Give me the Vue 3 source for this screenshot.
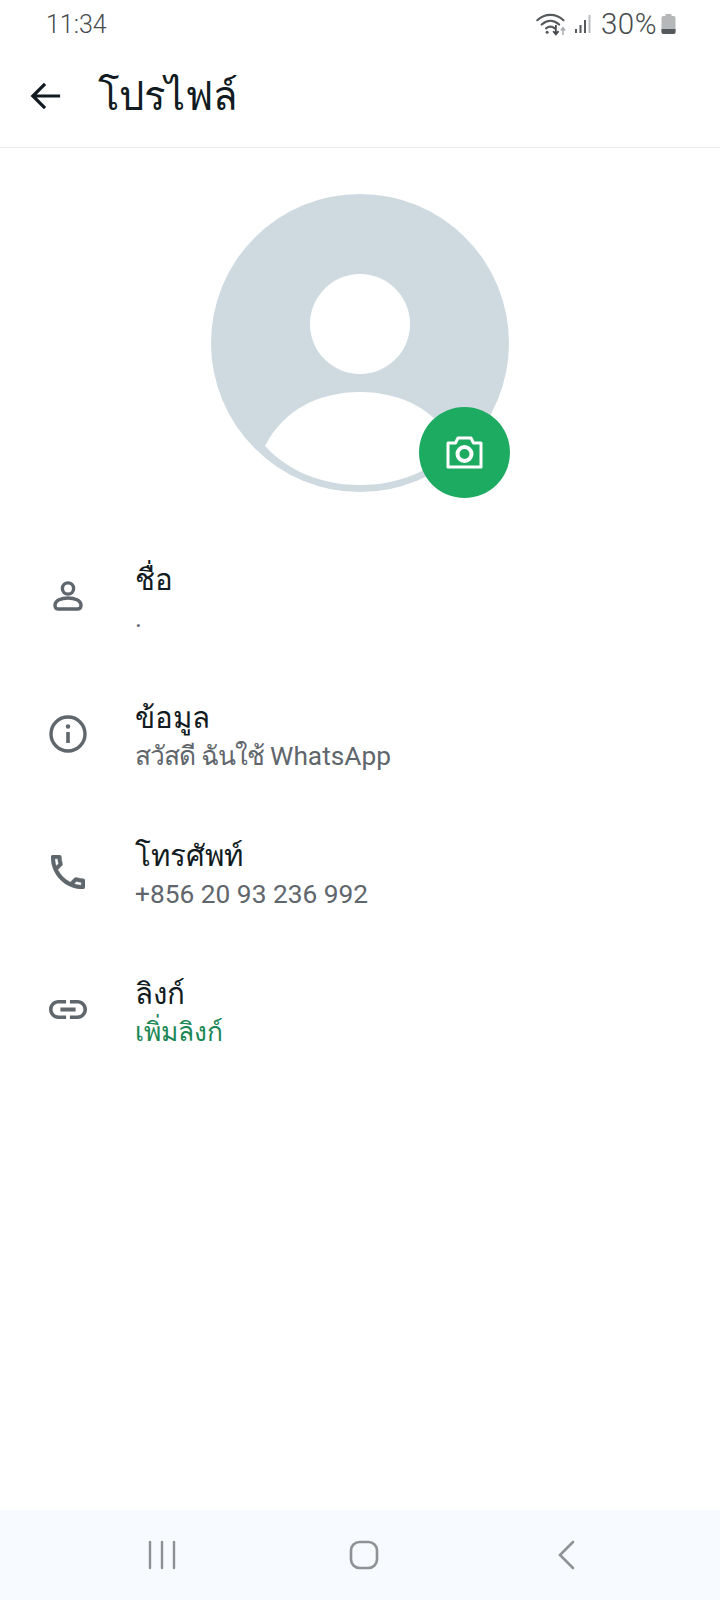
<script setup>
const rows = [
  { id: "name", title: "ชื่อ", sub: "." },
  { id: "about", title: "ข้อมูล", lead: "สวัสดี ฉันใช้", sub: " WhatsApp" },
  { id: "phone", title: "โทรศัพท์", sub: "+856 20 93 236 992" },
  { id: "link", title: "ลิงก์", sub: "เพิ่มลิงก์", green: true },
];
</script>

<template>
  <div class="screen">
    <div class="status-bar">
      <span class="time">11:34</span>
      <div class="status-right">
        <svg class="wifi" width="33" height="24" viewBox="0 0 30 22" fill="none">
          <path d="M2 7.500C9 1 19 1 26 7.500" stroke="#55595c" stroke-width="2" stroke-linecap="round" />
          <path d="M6 11.500C11 7 17 7 22 11.500" stroke="#55595c" stroke-width="2" stroke-linecap="round" />
          <path d="M10 15C12.500 13 15.500 13 18 15" stroke="#55595c" stroke-width="2" stroke-linecap="round" />
          <circle cx="11" cy="18.500" r="1.400" fill="#55595c" />
          <path d="M19 12V20M16.500 17.500L19 20.500L21.500 17.500" stroke="#44484b" stroke-width="1.600" />
          <path d="M25.500 21V15M23.500 17L25.500 14.500L27.500 17" stroke="#a9acae" stroke-width="1.400" />
        </svg>
        <svg class="signal" width="18" height="20" viewBox="0 0 17 20">
          <rect x="0.500" y="15" width="2" height="4" fill="#55595c" />
          <rect x="5" y="11" width="2" height="8" fill="#55595c" />
          <rect x="9.500" y="6" width="2" height="13" fill="#55595c" />
          <rect x="14" y="1" width="2" height="18" fill="#b9bbbd" />
        </svg>
        <span class="percent">30%</span>
        <svg class="battery" width="15" height="20" viewBox="0 0 15 20">
          <rect x="4.500" y="0" width="6" height="3" fill="#b5b7b8" />
          <rect x="0.500" y="2" width="14" height="18" rx="2" fill="#b5b7b8" />
          <path d="M0.500 15H14.500V18A2 2 0 0 1 12.500 20H2.500A2 2 0 0 1 0.500 18Z" fill="#55595c" />
        </svg>
      </div>
    </div>

    <header class="app-bar">
      <svg class="back" width="32" height="30" viewBox="0 0 34 30" fill="none">
        <path d="M32 15H3M16 2L3 15L16 28" stroke="#111b21" stroke-width="3.400" />
      </svg>
      <h1 class="page-title">โปรไฟล์</h1>
    </header>

    <div class="avatar-wrap">
      <div class="avatar">
        <svg width="298" height="298" viewBox="0 0 298 298">
          <circle cx="149" cy="149" r="149" fill="#cfdae0" />
          <circle cx="149" cy="130" r="50" fill="#fff" />
          <path d="M54 252C72 216 108 198 149 198C190 198 226 216 244 252C220 278 186 291 149 291C112 291 78 278 54 252Z" fill="#fff" />
        </svg>
        <button class="camera">
          <svg width="37" height="33" viewBox="0 0 37 33" fill="none">
            <path d="M2 7H9.500L12 2H25L27.500 7H35V31H2Z" stroke="#fff" stroke-width="3" stroke-linejoin="round" />
            <circle cx="18.500" cy="18" r="7" stroke="#fff" stroke-width="4" />
          </svg>
        </button>
      </div>
    </div>

    <ul class="info-list">
      <li v-for="row in rows" :key="row.id" class="info-row">
        <div class="icon-cell">
          <svg v-if="row.id === 'name'" width="30" height="30" viewBox="0 0 30 30" fill="none">
            <circle cx="15" cy="7.500" r="5.600" stroke="#5f666c" stroke-width="3.400" />
            <path d="M2 24C2 19.500 8.500 17 15 17C21.500 17 28 19.500 28 24C28 26.500 27 28 25 28H5C3 28 2 26.500 2 24Z" stroke="#5f666c" stroke-width="3.400" />
          </svg>
          <svg v-else-if="row.id === 'about'" width="38" height="38" viewBox="0 0 38 38" fill="none">
            <circle cx="19" cy="19" r="17" stroke="#5f666c" stroke-width="3.400" />
            <path d="M19 17V28" stroke="#5f666c" stroke-width="3.600" />
            <circle cx="19" cy="11.500" r="2.200" fill="#5f666c" />
          </svg>
          <svg v-else-if="row.id === 'phone'" width="34" height="34" viewBox="3 3 18 18">
            <path d="M6.540 5c.06.89.21 1.760.45 2.590l-1.200 1.200c-.41-1.200-.67-2.470-.76-3.790h1.510m9.860 12.020c.85.24 1.720.39 2.600.45v1.490c-1.320-.09-2.590-.35-3.800-.75l1.200-1.190M7.500 3H4c-.55 0-1 .45-1 1 0 9.390 7.610 17 17 17 .55 0 1-.45 1-1v-3.490c0-.55-.45-1-1-1-1.240 0-2.450-.2-3.570-.57-.1-.04-.21-.05-.31-.05-.26 0-.51.1-.71.29l-2.200 2.200c-2.830-1.450-5.150-3.760-6.590-6.590l2.200-2.200c.28-.28.36-.67.25-1.020C8.700 6.450 8.500 5.250 8.500 4c0-.55-.45-1-1-1z" fill="#5f666c" stroke="#5f666c" stroke-width="0.200" />
          </svg>
          <svg v-else width="38" height="19" viewBox="2 7 20 10">
            <path d="M3.900 12c0-1.710 1.390-3.100 3.100-3.100h4V7H7c-2.760 0-5 2.240-5 5s2.240 5 5 5h4v-1.900H7c-1.710 0-3.100-1.390-3.100-3.100zM8 13h8v-2H8v2zm9-6h-4v1.900h4c1.710 0 3.100 1.390 3.100 3.100s-1.390 3.100-3.100 3.100h-4V17h4c2.760 0 5-2.240 5-5s-2.240-5-5-5z" fill="#5f666c" />
          </svg>
        </div>
        <div class="text-cell">
          <div class="row-title">{{ row.title }}</div>
          <div class="row-sub" :class="{ green: row.green }"><span v-if="row.lead" class="lead">{{ row.lead }}</span>{{ row.sub }}</div>
        </div>
      </li>
    </ul>

    <nav class="nav-bar">
      <svg width="28" height="30" viewBox="0 0 28 30">
        <path d="M2 2V28M14 2V28M26 2V28" stroke="#8e9195" stroke-width="2.400" stroke-linecap="round" fill="none" />
      </svg>
      <svg width="30" height="30" viewBox="0 0 30 30">
        <rect x="2" y="2" width="26" height="26" rx="8.500" stroke="#8e9195" stroke-width="2.600" fill="none" />
      </svg>
      <svg width="18" height="30" viewBox="0 0 18 30">
        <path d="M16 2L3 15L16 28" stroke="#8e9195" stroke-width="2.600" stroke-linecap="round" fill="none" />
      </svg>
    </nav>
  </div>
</template>

<style scoped>
.screen {
  width: 720px;
  height: 1600px;
  display: flex;
  flex-direction: column;
  background: #fff;
  font-family: Roboto, "Noto Sans", "DejaVu Sans", sans-serif;
  overflow: hidden;
}

.status-bar {
  height: 48px;
  padding: 0 44px 0 46px;
  display: flex;
  align-items: center;
  justify-content: space-between;
  color: #474b4e;
}

.time {
  font-size: 25px;
  font-weight: 300;
}

.status-right {
  display: flex;
  align-items: center;
}

.wifi {
  margin-right: 6px;
}

.signal {
  margin-right: 9px;
}

.percent {
  font-size: 29.5px;
  font-weight: 300;
  letter-spacing: 0.5px;
  margin-right: 4px;
}

.app-bar {
  height: 95px;
  padding-bottom: 4px;
  display: flex;
  align-items: center;
  padding-left: 30px;
  border-bottom: 1px solid #ececec;
}

.page-title {
  margin: 0 0 0 36px;
  font-size: 40px;
  font-weight: 300;
  color: #111b21;
}

.avatar-wrap {
  padding-top: 46px;
  display: flex;
  justify-content: center;
}

.avatar {
  position: relative;
  width: 298px;
  height: 298px;
}

.camera {
  position: absolute;
  left: 208px;
  top: 213px;
  width: 91px;
  height: 91px;
  border: none;
  border-radius: 50%;
  background: #1daa61;
  display: flex;
  align-items: center;
  justify-content: center;
  padding: 0;
}

.info-list {
  list-style: none;
  margin: 37px 0 0;
  padding: 0;
  flex: 1;
}

.info-row {
  height: 138px;
  display: flex;
  align-items: center;
}

.icon-cell {
  width: 135px;
  padding-bottom: 5px;
  display: flex;
  justify-content: center;
}

.row-title {
  font-size: 29.5px;
  line-height: 40px;
  font-weight: 300;
  color: #111b21;
}

.row-sub {
  font-size: 26.3px;
  line-height: 36px;
  color: #5f666c;
}

.row-sub .lead {
  letter-spacing: -1px;
}

.row-sub.green {
  color: #1b8755;
}

.nav-bar {
  height: 90px;
  background: #f7fafe;
  display: grid;
  grid-template-columns: repeat(3, 202px);
  justify-content: center;
  justify-items: center;
  align-items: center;
  padding-left: 7px;
}
</style>

<style>
html,
body {
  margin: 0;
  background: #fff;
}
</style>
